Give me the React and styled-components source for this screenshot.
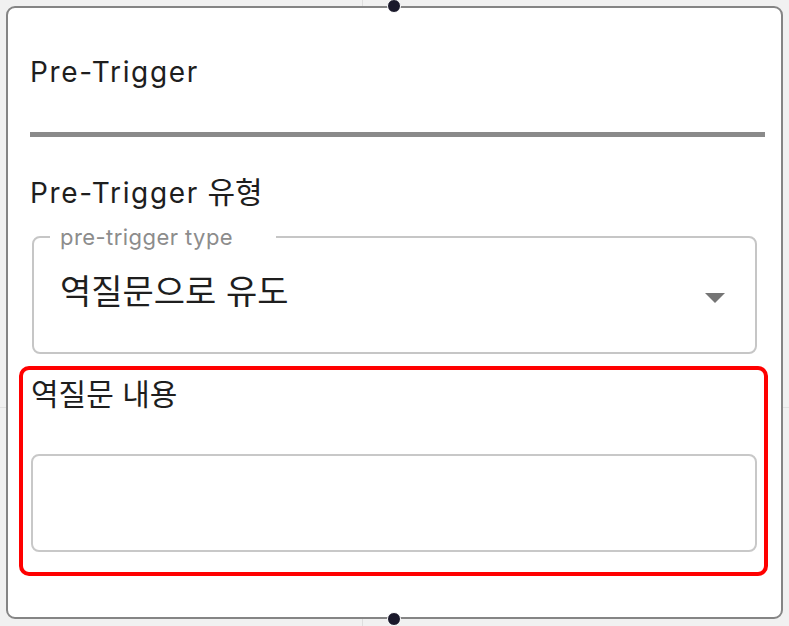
import React from "react";
import styled, { createGlobalStyle } from "styled-components";

const GlobalStyle = createGlobalStyle`
  html, body {
    margin: 0;
    padding: 0;
  }
  body {
    background-color: #f1f1f1;
    background-image:
      linear-gradient(to right, transparent 362px, #dedede 362px, #dedede 363px, transparent 363px),
      linear-gradient(to bottom, transparent 407px, #e2e2e2 407px, #e2e2e2 408px, transparent 408px);
    font-family: Inter, "Noto Sans CJK KR", sans-serif;
    color: #1e1e1e;
  }
`;

const Canvas = styled.div`
  width: 789px;
  height: 626px;
  padding: 6px 6px 0 6px;
  box-sizing: border-box;
`;

const Node = styled.div`
  position: relative;
  width: 777px;
  height: 613px;
  box-sizing: border-box;
  background: #fff;
  border: 2px solid #858585;
  border-radius: 9px;
  padding: 0 16px 0 22px;
  display: flex;
  flex-direction: column;
`;

const Handle = styled.span`
  position: absolute;
  left: 50%;
  ${(p) => (p.bottom ? "bottom: -9px;" : "top: -9px;")}
  width: 12px;
  height: 12px;
  margin-left: -8px;
  border-radius: 50%;
  background: #1a192b;
  border: 1.5px solid #fff;
`;

// latin words are set a touch smaller and wider than the hangul around them
const Latin = styled.span`
  font-size: 28px;
  letter-spacing: 0.06em;
`;

const Title = styled.div`
  margin-top: 47px;
  font-size: 28px;
  line-height: 34px;
`;

const Divider = styled.hr`
  margin: 43px 0 0 0;
  height: 5px;
  border: none;
  background: #8a8a8a;
`;

const Label = styled.div`
  margin-top: ${(p) => p.top || 0}px;
  font-size: 30px;
  line-height: 34px;
`;

const Outline = styled.fieldset`
  margin: 15px 8px 0 2px;
  padding: 0 16px;
  border: 2px solid #c6c6c6;
  border-radius: 8px;
`;

const Legend = styled.legend`
  padding: 0 43px 0 10px;
  font-size: 22px;
  line-height: 24px;
  letter-spacing: 0.02em;
  color: #8c8c8c;
`;

const SelectRow = styled.div`
  height: 103px;
  box-sizing: border-box;
  padding: 26px 14px 0 10px;
  display: flex;
  align-items: flex-start;
  justify-content: space-between;
`;

const Value = styled.div`
  font-size: 34px;
  line-height: 34px;
  color: #1e1e1e;
`;

const Caret = styled.svg`
  margin-top: 18px;
`;

const Highlight = styled.div`
  margin: 12px -3px 0 -11px;
  padding: 7px 7px 20px 8px;
  border: 4px solid #ff0000;
  border-radius: 10px;
  display: flex;
  flex-direction: column;
`;

const TextArea = styled.textarea`
  margin-top: 43px;
  height: 98px;
  box-sizing: border-box;
  border: 2px solid #c8c8c8;
  border-radius: 8px;
  resize: none;
  outline: none;
  background: #fff;
`;

export default function App() {
  return (
    <>
      <GlobalStyle />
      <Canvas>
        <Node>
          <Handle />
          <Title>
            <Latin>Pre-Trigger</Latin>
          </Title>
          <Divider />
          <Label top={38}>
            <Latin>Pre-Trigger</Latin> 유형
          </Label>
          <Outline>
            <Legend>pre-trigger type</Legend>
            <SelectRow>
              <Value>역질문으로 유도</Value>
              <Caret width="20" height="10" viewBox="0 0 20 10">
                <path d="M0 0h20L10 10z" fill="#757575" />
              </Caret>
            </SelectRow>
          </Outline>
          <Highlight>
            <Label>역질문 내용</Label>
            <TextArea />
          </Highlight>
          <Handle bottom />
        </Node>
      </Canvas>
    </>
  );
}
